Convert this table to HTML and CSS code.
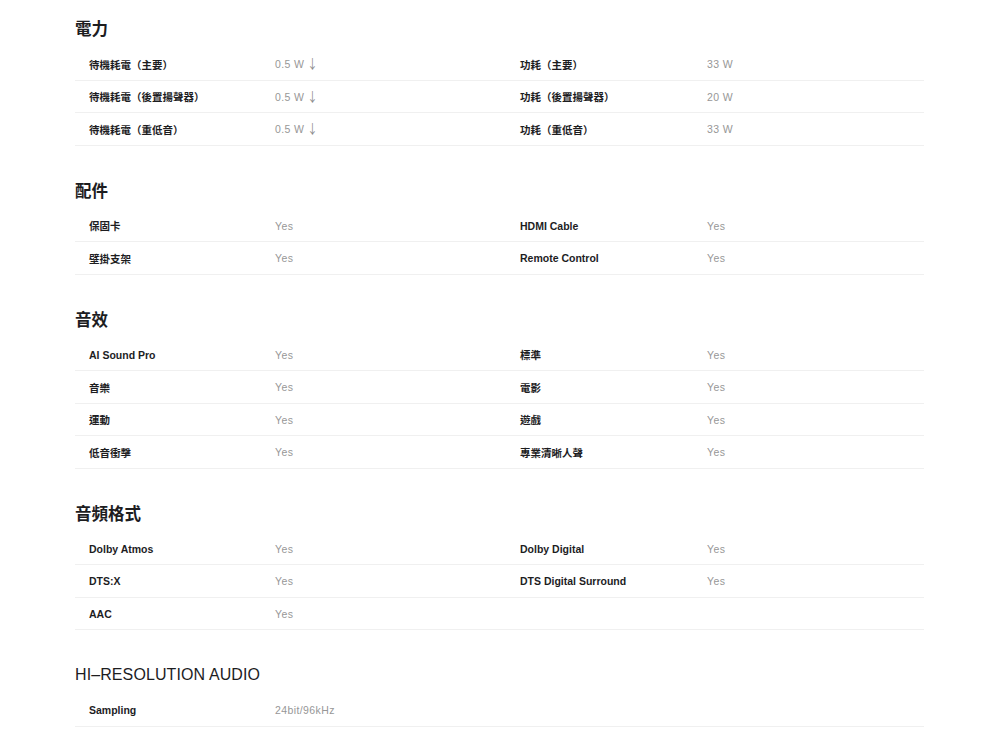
FILE: index.html
```html
<!DOCTYPE html>
<html lang="zh-Hant">
<head>
<meta charset="utf-8">
<title>Specs</title>
<link rel="stylesheet" href="styles.css">
</head>
<body>
<main class="specs">
  <section class="spec-section">
    <h2 class="spec-title">電力</h2>
    <div class="spec-row">
      <span class="spec-label">待機耗電（主要）</span><span class="spec-value">0.5 W <span class="arrow">↓</span></span>
      <span class="spec-label">功耗（主要）</span><span class="spec-value">33 W</span>
    </div>
    <div class="spec-row">
      <span class="spec-label">待機耗電（後置揚聲器）</span><span class="spec-value">0.5 W <span class="arrow">↓</span></span>
      <span class="spec-label">功耗（後置揚聲器）</span><span class="spec-value">20 W</span>
    </div>
    <div class="spec-row">
      <span class="spec-label">待機耗電（重低音）</span><span class="spec-value">0.5 W <span class="arrow">↓</span></span>
      <span class="spec-label">功耗（重低音）</span><span class="spec-value">33 W</span>
    </div>
  </section>

  <section class="spec-section">
    <h2 class="spec-title">配件</h2>
    <div class="spec-row">
      <span class="spec-label">保固卡</span><span class="spec-value">Yes</span>
      <span class="spec-label">HDMI Cable</span><span class="spec-value">Yes</span>
    </div>
    <div class="spec-row">
      <span class="spec-label">壁掛支架</span><span class="spec-value">Yes</span>
      <span class="spec-label">Remote Control</span><span class="spec-value">Yes</span>
    </div>
  </section>

  <section class="spec-section">
    <h2 class="spec-title">音效</h2>
    <div class="spec-row">
      <span class="spec-label">AI Sound Pro</span><span class="spec-value">Yes</span>
      <span class="spec-label">標準</span><span class="spec-value">Yes</span>
    </div>
    <div class="spec-row">
      <span class="spec-label">音樂</span><span class="spec-value">Yes</span>
      <span class="spec-label">電影</span><span class="spec-value">Yes</span>
    </div>
    <div class="spec-row">
      <span class="spec-label">運動</span><span class="spec-value">Yes</span>
      <span class="spec-label">遊戲</span><span class="spec-value">Yes</span>
    </div>
    <div class="spec-row">
      <span class="spec-label">低音衝擊</span><span class="spec-value">Yes</span>
      <span class="spec-label">專業清晰人聲</span><span class="spec-value">Yes</span>
    </div>
  </section>

  <section class="spec-section">
    <h2 class="spec-title">音頻格式</h2>
    <div class="spec-row">
      <span class="spec-label">Dolby Atmos</span><span class="spec-value">Yes</span>
      <span class="spec-label">Dolby Digital</span><span class="spec-value">Yes</span>
    </div>
    <div class="spec-row">
      <span class="spec-label">DTS:X</span><span class="spec-value">Yes</span>
      <span class="spec-label">DTS Digital Surround</span><span class="spec-value">Yes</span>
    </div>
    <div class="spec-row">
      <span class="spec-label">AAC</span><span class="spec-value">Yes</span>
    </div>
  </section>

  <section class="spec-section">
    <h2 class="spec-title spec-title--latin">HI–RESOLUTION AUDIO</h2>
    <div class="spec-row">
      <span class="spec-label">Sampling</span><span class="spec-value">24bit/96kHz</span>
    </div>
  </section>
</main>
</body>
</html>
```

FILE: styles.css
```css
* {
  box-sizing: border-box;
}

html, body {
  margin: 0;
  padding: 0;
  background: #ffffff;
}

body {
  font-family: "Liberation Sans", "Noto Sans CJK TC", sans-serif;
  color: #1d1d1f;
}

.specs {
  padding: 17px 76px 20px 75px;
}

.spec-section + .spec-section {
  margin-top: 33px;
}

.spec-title {
  margin: 0 0 7px 0;
  font-size: 16.5px;
  line-height: 24px;
  font-weight: 700;
  color: #1d1d1f;
}

.spec-title--latin {
  font-size: 16px;
  font-weight: 400;
  letter-spacing: 0.1px;
}

.spec-row {
  display: grid;
  grid-template-columns: 186px 245px 187px 1fr;
  align-items: center;
  height: 32.5px;
  padding-left: 14px;
  padding-top: 1px;
  border-bottom: 1.5px solid #f0f0f0;
  font-size: 10.5px;
}

.spec-label {
  font-weight: 700;
  color: #1d1d1f;
}

.spec-value {
  font-weight: 400;
  color: #979797;
  letter-spacing: 0.4px;
}

.arrow {
  display: inline-block;
  margin-left: -2px;
  font-family: "Noto Sans CJK TC", sans-serif;
  font-size: 13px;
  line-height: 10px;
  color: #8c8c8c;
  transform: scaleX(0.8);
}
```
